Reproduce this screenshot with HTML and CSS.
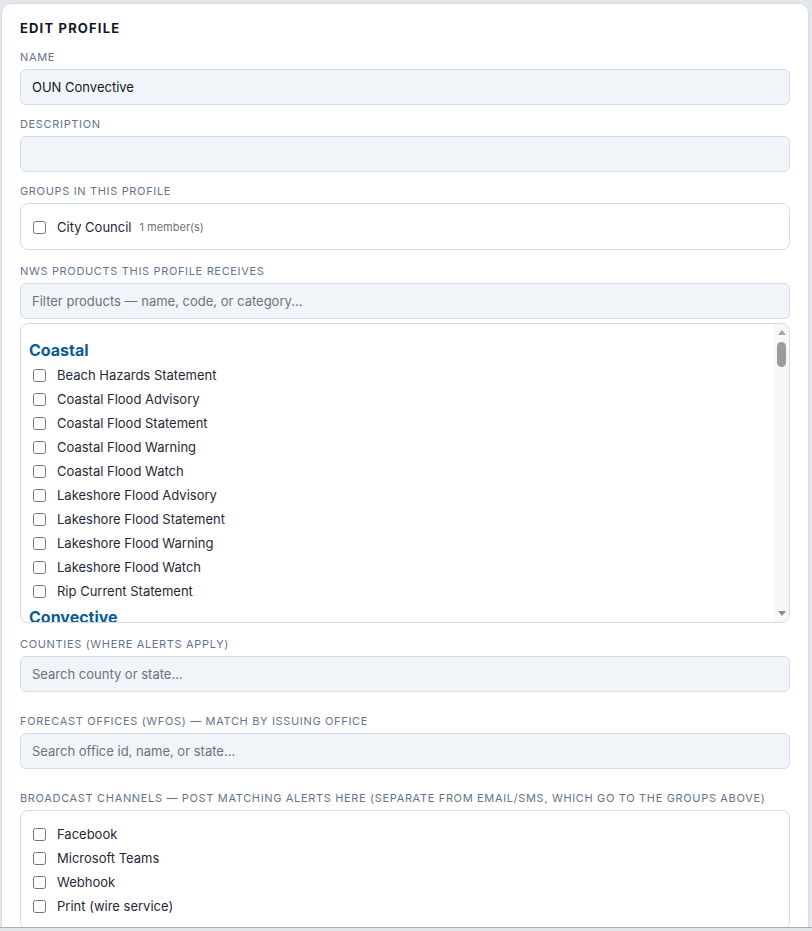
FILE: index.html
```html
<!DOCTYPE html>
<html lang="en">
<head>
  <meta charset="UTF-8">
  <title>Edit Profile</title>
  <link rel="stylesheet" href="styles.css">
</head>
<body>

<div class="frame">
  <div class="card">
    <h2 class="title">EDIT PROFILE</h2>

    <label class="field-label">NAME</label>
    <input class="text-input" type="text" value="OUN Convective">

    <label class="field-label">DESCRIPTION</label>
    <input class="text-input" type="text" value="">

    <label class="field-label">GROUPS IN THIS PROFILE</label>
    <div class="check-box groups">
      <label class="check-row"><input type="checkbox"> City Council <span class="muted">1 member(s)</span></label>
    </div>

    <label class="field-label">NWS PRODUCTS THIS PROFILE RECEIVES</label>
    <input class="text-input" type="text" placeholder="Filter products — name, code, or category...">
    <div class="list-wrap">
      <div class="product-list" id="productList"></div>
      <!-- drawn scrollbar, the browser hides the real one in screenshots -->
      <div class="scrollbar">
        <svg class="arrow up" width="8" height="5" viewBox="0 0 8 5"><path d="M4 0L8 5H0z" fill="#a3a3a3"/></svg>
        <div class="thumb"></div>
        <svg class="arrow down" width="8" height="5" viewBox="0 0 8 5"><path d="M0 0H8L4 5z" fill="#8f8f8f"/></svg>
      </div>
    </div>

    <label class="field-label">COUNTIES (WHERE ALERTS APPLY)</label>
    <input class="text-input" type="text" placeholder="Search county or state...">
    <div class="picked"></div>

    <label class="field-label">FORECAST OFFICES (WFOS) — MATCH BY ISSUING OFFICE</label>
    <input class="text-input" type="text" placeholder="Search office id, name, or state...">
    <div class="picked"></div>

    <label class="field-label">BROADCAST CHANNELS — POST MATCHING ALERTS HERE (SEPARATE FROM EMAIL/SMS, WHICH GO TO THE GROUPS ABOVE)</label>
    <div class="check-box channels">
      <label class="check-row"><input type="checkbox"> Facebook</label>
      <label class="check-row"><input type="checkbox"> Microsoft Teams</label>
      <label class="check-row"><input type="checkbox"> Webhook</label>
      <label class="check-row"><input type="checkbox"> Print (wire service)</label>
    </div>
  </div>
</div>

<script>
  const categories = {
    "Coastal": ["Beach Hazards Statement", "Coastal Flood Advisory", "Coastal Flood Statement", "Coastal Flood Warning", "Coastal Flood Watch", "Lakeshore Flood Advisory", "Lakeshore Flood Statement", "Lakeshore Flood Warning", "Lakeshore Flood Watch", "Rip Current Statement"],
    "Convective": ["Extreme Wind Warning", "Severe Thunderstorm Warning", "Severe Thunderstorm Watch", "Severe Weather Statement", "Special Weather Statement", "Tornado Warning", "Tornado Watch"],
    "Fire": ["Extreme Fire Danger", "Fire Warning", "Fire Weather Watch", "Red Flag Warning"],
    "Flood": ["Areal Flood Advisory", "Flash Flood Statement", "Flash Flood Warning", "Flash Flood Watch", "Flood Advisory", "Flood Statement", "Flood Warning", "Flood Watch", "Hydrologic Outlook"],
    "Heat": ["Excessive Heat Warning", "Excessive Heat Watch", "Extreme Heat Warning", "Extreme Heat Watch", "Heat Advisory"],
    "Marine": ["Brisk Wind Advisory", "Gale Warning", "Gale Watch", "Hazardous Seas Warning", "Hazardous Seas Watch", "Heavy Freezing Spray Warning", "Hurricane Force Wind Warning", "Low Water Advisory", "Marine Weather Statement", "Small Craft Advisory", "Special Marine Warning", "Storm Warning", "Storm Watch"],
    "Non-Weather": ["Administrative Message", "Avalanche Warning", "Child Abduction Emergency", "Civil Danger Warning", "Civil Emergency Message", "Earthquake Warning", "Evacuation Immediate", "Hazardous Materials Warning", "Law Enforcement Warning", "Local Area Emergency", "Nuclear Power Plant Warning", "Radiological Hazard Warning", "Shelter In Place Warning", "Test Message"],
    "Other": ["Air Quality Alert", "Air Stagnation Advisory", "Ashfall Advisory", "Blowing Dust Advisory", "Dense Fog Advisory", "Dense Smoke Advisory", "Dust Storm Warning", "Freezing Fog Advisory", "Short Term Forecast"],
    "Tropical": ["Hurricane Local Statement", "Hurricane Warning", "Hurricane Watch", "Storm Surge Warning", "Storm Surge Watch", "Tropical Depression Local Statement", "Tropical Storm Warning", "Tropical Storm Watch", "Typhoon Warning", "Typhoon Watch"],
    "Tsunami": ["Tsunami Advisory", "Tsunami Warning", "Tsunami Watch"],
    "Wind": ["High Wind Warning", "High Wind Watch", "Wind Advisory"],
    "Winter": ["Blizzard Warning", "Cold Weather Advisory", "Extreme Cold Warning", "Extreme Cold Watch", "Freeze Warning", "Freeze Watch", "Freezing Spray Advisory", "Frost Advisory", "Hard Freeze Warning", "Hard Freeze Watch", "Ice Storm Warning", "Lake Effect Snow Warning", "Snow Squall Warning", "Wind Chill Advisory", "Wind Chill Warning", "Wind Chill Watch", "Winter Storm Warning", "Winter Storm Watch", "Winter Weather Advisory"]
  };

  const productList = document.getElementById('productList');

  Object.keys(categories).forEach(cat => {
    const h = document.createElement('h4');
    h.className = 'cat-title';
    h.textContent = cat;
    productList.appendChild(h);
    categories[cat].forEach(name => {
      const row = document.createElement('label');
      row.className = 'check-row';
      row.innerHTML = `<input type="checkbox"> ${name}`;
      productList.appendChild(row);
    });
  });
</script>

</body>
</html>
```

FILE: styles.css
```css
body {
  font-family: Inter, 'Noto Sans', sans-serif;
  background: #e3e6ea;
  margin: 0;
  color: #1f2937;
}
.frame {
  height: 928px;
  overflow: hidden;
  padding: 3px 3px 0 1px;
  box-sizing: border-box;
  border-bottom: 1px solid #a8abb0;
}
.card {
  background: #fff;
  border: 1px solid #d6dde7;
  border-radius: 10px;
  padding: 16px 18px;
}
.title {
  margin: 0 0 14px;
  font-size: 13px;
  line-height: 16px;
  font-weight: 700;
  letter-spacing: 0.09em;
  color: #111827;
}
.field-label {
  display: block;
  font-size: 11px;
  line-height: 14px;
  letter-spacing: 0.06em;
  color: #64748b;
  margin: 12px 0 5px;
}
.title + .field-label {
  margin-top: 0;
}
.text-input {
  display: block;
  width: 100%;
  box-sizing: border-box;
  height: 36px;
  padding: 0 11px;
  background: #f1f5fa;
  border: 1px solid #d3dce8;
  border-radius: 6px;
  font-family: inherit;
  font-size: 13px;
  color: #111827;
  outline: none;
}
.text-input::placeholder {
  color: #6b7280;
}
.check-box {
  border: 1px solid #d6dde7;
  border-radius: 8px;
  background: #fff;
  padding: 10px 8px;
}
.groups {
  padding: 11px 8px 10px;
  margin-bottom: 14px;
}
.groups + .field-label {
  margin-top: 0;
}
.channels {
  padding: 11px 8px;
}
.check-row {
  display: flex;
  align-items: center;
  height: 24px;
  font-size: 13px;
  color: #1f2937;
}
.check-row input {
  margin: 0 11px 0 4px;
  width: 13px;
  height: 13px;
}
.muted {
  font-size: 11px;
  color: #6b7280;
  margin-left: 8px;
}
.list-wrap {
  position: relative;
  margin: 4px 0 14px;
}
.list-wrap + .field-label {
  margin-top: 0;
}
.product-list {
  height: 300px;
  box-sizing: border-box;
  overflow-y: scroll;
  border: 1px solid #d6dde7;
  border-radius: 8px;
  padding: 12px 8px 8px;
}
.scrollbar {
  position: absolute;
  top: 1px;
  bottom: 1px;
  right: 1px;
  width: 15px;
  background: #f7f7f7;
  border-radius: 0 7px 7px 0;
}
.scrollbar .arrow {
  position: absolute;
  left: 4px;
}
.scrollbar .up {
  top: 6px;
}
.scrollbar .down {
  bottom: 6px;
}
.thumb {
  position: absolute;
  top: 18px;
  left: 3px;
  width: 9px;
  height: 25px;
  border-radius: 5px;
  background: #9b9b9b;
}
.cat-title {
  margin: 4px 0 3px;
  font-size: 16px;
  line-height: 20px;
  font-weight: 700;
  color: #0d5c91;
}
.picked {
  height: 10px;
}
```
